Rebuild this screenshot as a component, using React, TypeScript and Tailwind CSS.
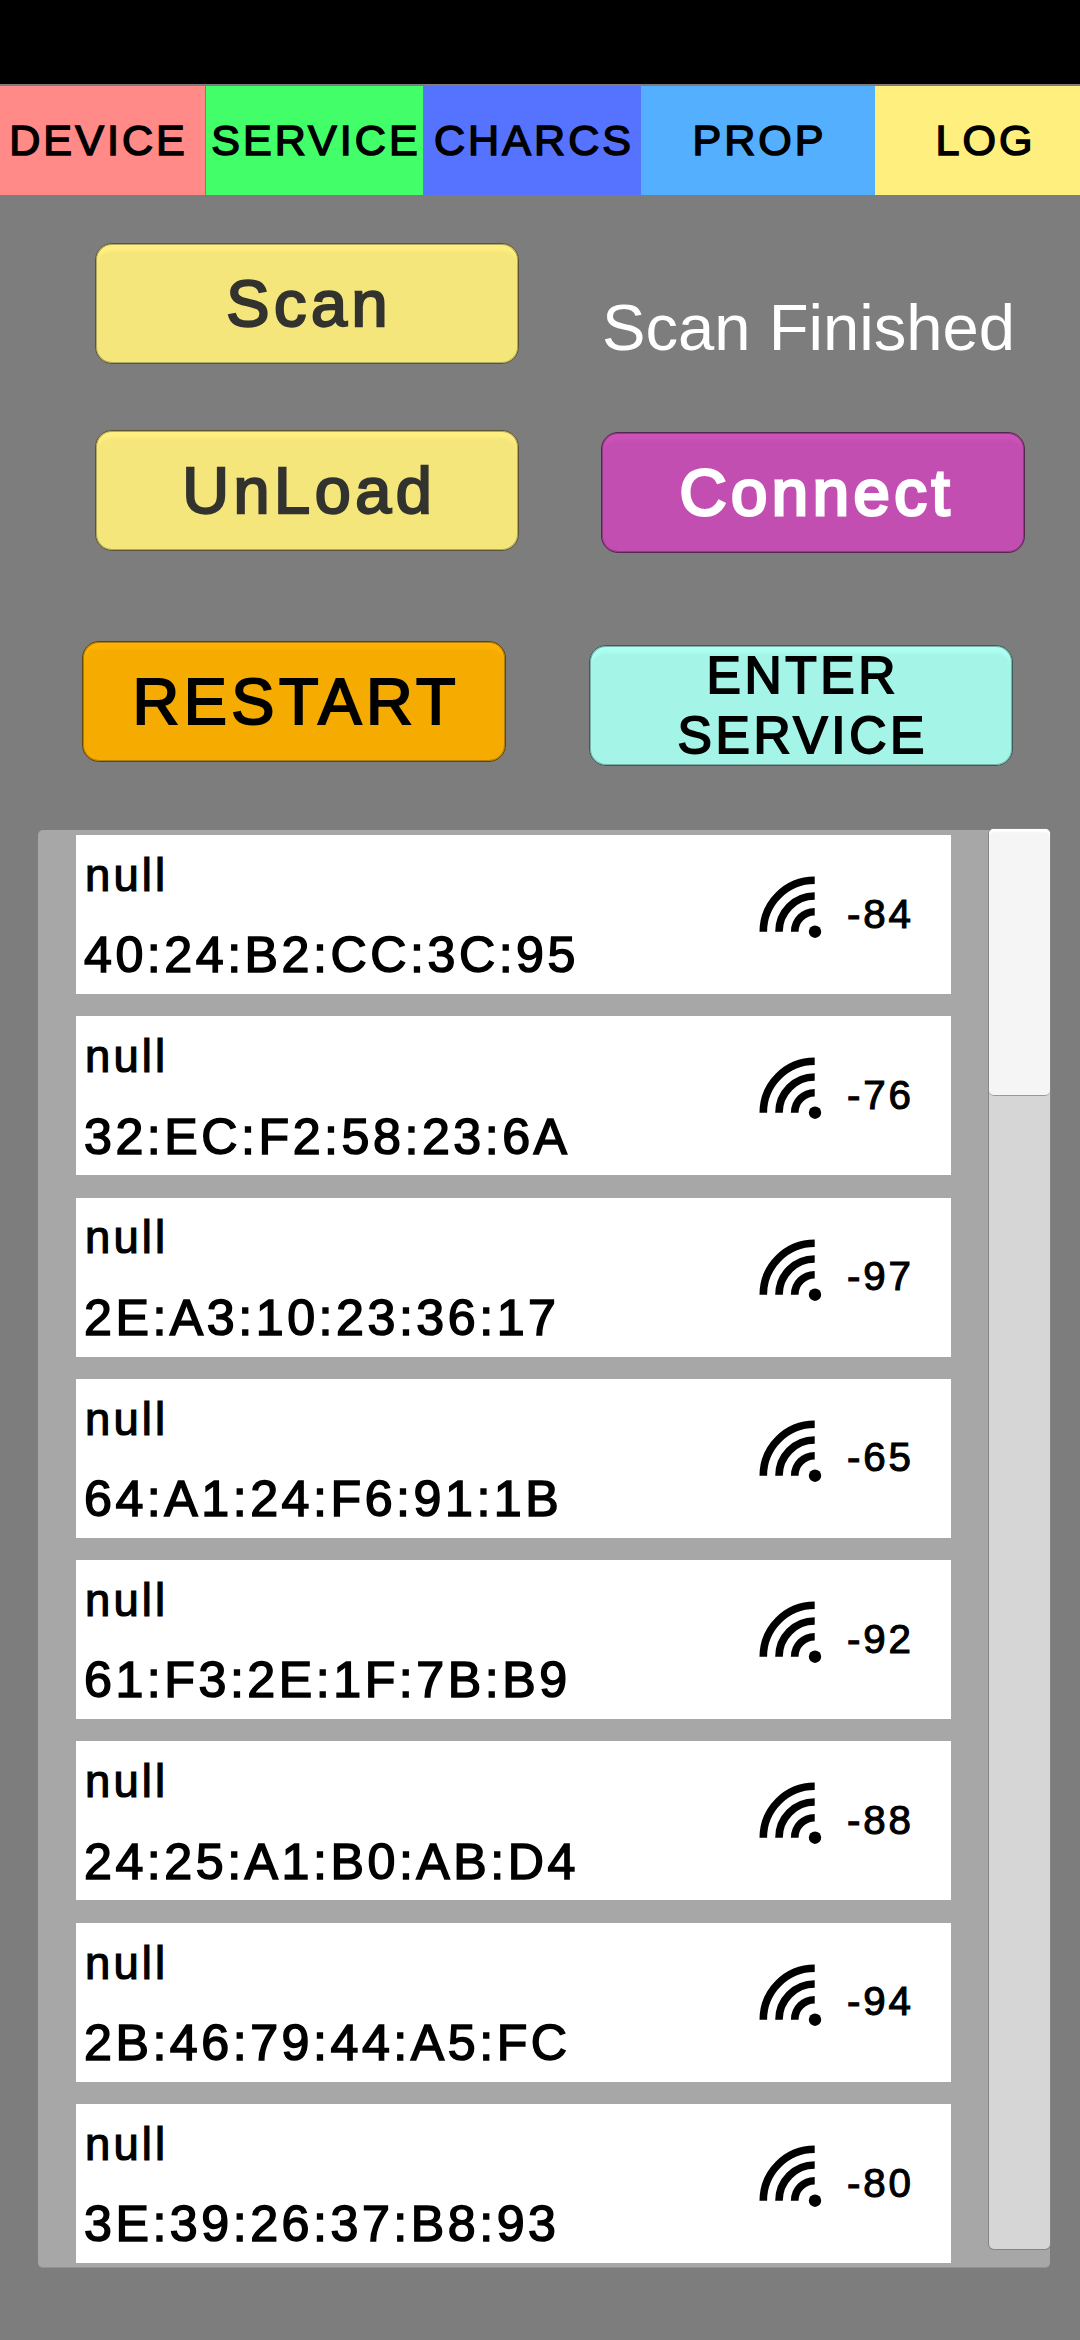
type Tab = { label: string; className: string };

const tabs: Tab[] = [
  { label: 'DEVICE', className: 'w-[205px] mr-px bg-[#ff8a88] pr-[11px]' },
  { label: 'SERVICE', className: 'w-[217px] mr-px bg-[#42ff69]' },
  { label: 'CHARCS', className: 'w-[217px] bg-[#5673ff]' },
  { label: 'PROP', className: 'w-[234px] bg-[#54b0ff]' },
  { label: 'LOG', className: 'w-[205px] bg-[#ffef7f] pl-[13px]' },
];

const devices = [
  { mac: '40:24:B2:CC:3C:95', rssi: -84 },
  { mac: '32:EC:F2:58:23:6A', rssi: -76 },
  { mac: '2E:A3:10:23:36:17', rssi: -97 },
  { mac: '64:A1:24:F6:91:1B', rssi: -65 },
  { mac: '61:F3:2E:1F:7B:B9', rssi: -92 },
  { mac: '24:25:A1:B0:AB:D4', rssi: -88 },
  { mac: '2B:46:79:44:A5:FC', rssi: -94 },
  { mac: '3E:39:26:37:B8:93', rssi: -80 },
];

function ActionButton({ label, className }: { label: string; className: string }) {
  return (
    <button
      className={`flex h-[121px] w-[424px] shrink-0 items-center justify-center rounded-[17px] border text-center tracking-[0.07em] ${className}`}
    >
      <span className="-mr-[0.07em] pt-px">{label}</span>
    </button>
  );
}

function SignalIcon() {
  return (
    <svg className="h-[63px] w-[63px] shrink-0" viewBox="0 0 63 63" fill="none" stroke="#000" strokeWidth="7.6">
      <path d="M4.3 56.7A51.4 51.4 0 0 1 55.7 5.3" />
      <path d="M20 56.7A35.7 35.7 0 0 1 55.7 21" />
      <path d="M35.7 56.7A20 20 0 0 1 55.7 36.7" />
      <circle cx="56" cy="56.7" r="6.2" fill="#000" stroke="none" />
    </svg>
  );
}

function DeviceCard({ mac, rssi }: { mac: string; rssi: number }) {
  return (
    <li className="flex h-[159px] items-center bg-white text-black">
      <div className="w-[683px] pl-[8px] pt-[2px]">
        <div className="pl-px text-[45.4px] leading-[54px] tracking-[0.07em] [-webkit-text-stroke:1.2px_#000]">null</div>
        <div className="mt-[25.5px] text-[50.2px] leading-[54px] tracking-[0.07em] [-webkit-text-stroke:1.5px_#000]">
          {mac}
        </div>
      </div>
      <div className="-mt-[16px]">
        <SignalIcon />
      </div>
      <div className="ml-[25px] text-[40.3px] leading-[48px] tracking-[0.07em] [-webkit-text-stroke:1.1px_#000]">
        {rssi}
      </div>
    </li>
  );
}

export default function App() {
  return (
    <div className="flex h-[2340px] w-[1080px] flex-col overflow-hidden bg-[#7d7d7d] font-['Liberation_Sans',Arial,sans-serif]">
      <div className="h-[84px] shrink-0 bg-black" />

      <nav className="mt-[2px] flex h-[109px] shrink-0">
        {tabs.map((tab) => (
          <div
            key={tab.label}
            className={`flex shrink-0 items-center justify-center text-[43.1px] leading-none tracking-[0.07em] text-black [-webkit-text-stroke:1.5px_#000] ${tab.className}`}
          >
            <span className="-mr-[0.07em]">{tab.label}</span>
          </div>
        ))}
      </nav>

      <section className="mt-[47px] flex h-[588px] shrink-0">
        <div className="flex w-[589px] shrink-0 flex-col pl-[95px]">
          <ActionButton
            label="Scan"
            className="mt-px border-[#5a5536] bg-[#f4e67a] text-[64.8px] leading-none text-[#32322f] shadow-[inset_0_0_0_1px_#b3a95f,inset_0_8px_3px_-1px_#ffef80] [-webkit-text-stroke:2.3px_#32322f]"
          />
          <ActionButton
            label="UnLoad"
            className="mt-[66px] border-[#5a5536] bg-[#f4e67a] text-[64.8px] leading-none text-[#32322f] shadow-[inset_0_0_0_1px_#b3a95f,inset_0_8px_3px_-1px_#ffef80] [-webkit-text-stroke:2.3px_#32322f]"
          />
          <ActionButton
            label="RESTART"
            className="-ml-[13px] mt-[90px] border-[#5c450f] bg-[#f5ab00] text-[64.7px] leading-none text-black shadow-[inset_0_0_0_1px_#b37f0a,inset_0_8px_3px_-1px_#ffb200] [-webkit-text-stroke:2.1px_#000]"
          />
        </div>
        <div className="flex flex-col">
          <p className="ml-[13px] mt-[51px] whitespace-nowrap text-[65.2px] leading-[70px] text-white">Scan Finished</p>
          <ActionButton
            label="Connect"
            className="ml-[12px] mt-[69px] border-[#54294e] bg-[#c34eb1] pl-[3px] text-[65.2px] leading-none text-white shadow-[inset_0_0_0_1px_#8f3d83,inset_0_8px_3px_-1px_#cc52b9] [-webkit-text-stroke:3px_#fff]"
          />
          <ActionButton
            label="ENTER SERVICE"
            className="mt-[92px] border-[#3d5c57] bg-[#a4f5e7] px-[60px] text-[51.5px] leading-[59.7px] text-black shadow-[inset_0_0_0_1px_#7ab3a9,inset_0_8px_3px_-1px_#acfff2] [-webkit-text-stroke:1.8px_#000]"
          />
        </div>
      </section>

      <main className="ml-[38px] flex h-[1438px] w-[1012px] shrink-0 rounded-[5px] border-b border-[#929292] bg-[#a7a7a7]">
        <ul className="ml-[38px] mt-[5px] flex w-[875px] shrink-0 flex-col gap-[22.3px]">
          {devices.map((device) => (
            <DeviceCard key={device.mac} mac={device.mac} rssi={device.rssi} />
          ))}
        </ul>
        <div className="-mt-px ml-[38px] h-[1420px] w-[61px] shrink-0 rounded-[5px] bg-[#d6d6d6] shadow-[0_0_0_1px_#858585]">
          <div className="h-[267px] rounded-[5px] border-b border-[#999] bg-[#f5f5f5] shadow-[inset_0_3px_2px_#fff]" />
        </div>
      </main>
    </div>
  );
}
